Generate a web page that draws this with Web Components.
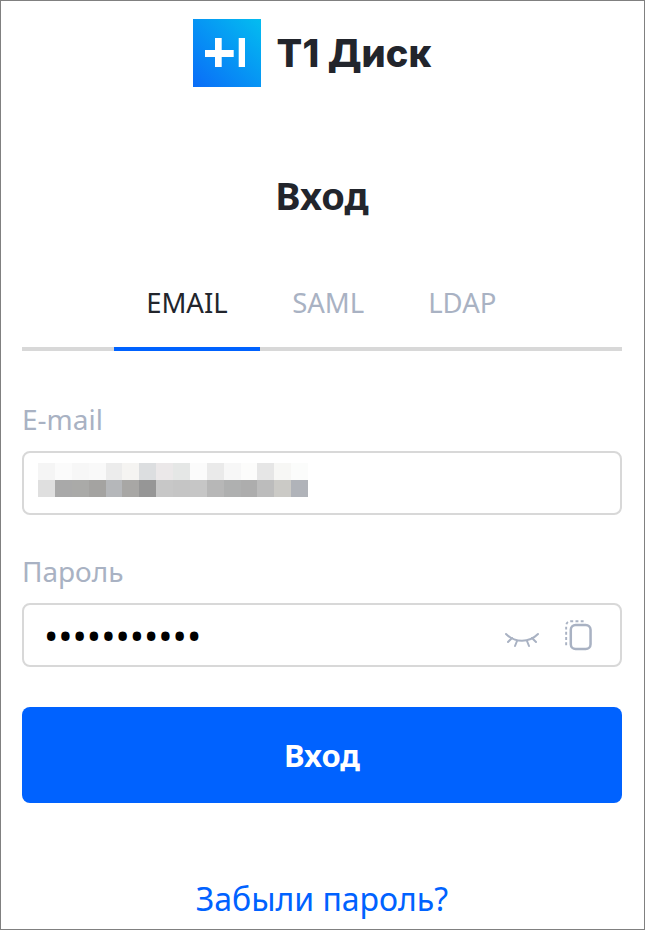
<!DOCTYPE html>
<html lang="ru">
<head>
<meta charset="utf-8">
<title>Вход</title>
<style>
  html, body { margin: 0; padding: 0; background: #fff; }
  body { font-family: "Noto Sans", "Open Sans", sans-serif; }
  .dots { display: block; margin-left: 6px; font-size: 38px; line-height: 38px; }
</style>
</head>
<body>
<login-page>
  <brand-logo></brand-logo>
  <h-title>Вход</h-title>
  <tab-bar>
    <tab-item active>EMAIL</tab-item>
    <tab-item>SAML</tab-item>
    <tab-item>LDAP</tab-item>
  </tab-bar>
  <form-field label="E-mail"><blurred-value></blurred-value></form-field>
  <form-field label="Пароль">
    <span class="dots">•••••••••••</span>
    <field-icons slot="end"></field-icons>
  </form-field>
  <login-button>Вход</login-button>
  <forgot-link>Забыли пароль?</forgot-link>
</login-page>
<script>
  // small helper so each class only has to give its markup
  class ShadowElement extends HTMLElement {
    constructor() {
      super();
      this.attachShadow({ mode: 'open' });
      this.shadowRoot.innerHTML = this.markup();
    }
    markup() { return '<slot></slot>'; }
  }

  customElements.define('login-page', class extends ShadowElement {
    markup() {
      return `<style>
        :host { display: flex; flex-direction: column; box-sizing: border-box; width: 645px; height: 930px;
          border: 1px solid #808080; padding: 18px 22px 0 21px; overflow: hidden; }
        ::slotted(*) { flex: none; }
      </style><slot></slot>`;
    }
  });

  customElements.define('brand-logo', class extends ShadowElement {
    markup() {
      return `<style>
        :host { display: flex; align-items: center; justify-content: center; gap: 16px; height: 68px; padding-right: 20px; }
        svg { display: block; }
        span { font: 800 38px/68px Inter, sans-serif; color: #22252c; letter-spacing: 0.1px; }
      </style>
      <svg width="68" height="68" viewBox="0 0 68 68">
        <defs><linearGradient id="g" x1="0" y1="1" x2="1" y2="0">
          <stop offset="0" stop-color="#0a6cf8"/><stop offset="1" stop-color="#03bdf0"/>
        </linearGradient></defs>
        <rect width="68" height="68" fill="url(#g)"/>
        <path d="M12 31h28.7v7H12zM22 19h6.7v29H22zM45.7 19H52v29h-6.3z" fill="#fff"/>
      </svg>
      <span>T1 Диск</span>`;
    }
  });

  customElements.define('h-title', class extends ShadowElement {
    markup() {
      return `<style>
        :host { display: block; margin-top: 84px; text-align: center; font-size: 38px; line-height: 48px;
          font-weight: 700; color: #22252c; }
      </style><slot></slot>`;
    }
  });

  customElements.define('tab-bar', class extends ShadowElement {
    markup() {
      return `<style>
        :host { display: flex; justify-content: center; margin-top: 51px; margin-bottom: 12px; padding-right: 2px;
          border-bottom: 4px solid #d8d8d8; height: 77px; }
      </style><slot></slot>`;
    }
  });

  customElements.define('tab-item', class extends ShadowElement {
    markup() {
      return `<style>
        :host { display: block; padding: 15px 32px 0; margin-bottom: -4px; height: 62px; border-bottom: 4px solid transparent;
          font-size: 27.5px; line-height: 36px; color: #a9b2c3; }
        :host([active]) { padding: 15px 32.5px 0; color: #22252c; border-bottom-color: #0062ff; }
      </style><slot></slot>`;
    }
  });

  customElements.define('form-field', class extends ShadowElement {
    markup() {
      return `<style>
        :host { display: block; margin-top: 39px; }
        label { display: block; font-size: 28px; line-height: 34px; color: #a9b2c3; margin-bottom: 15px; }
        .box { display: flex; align-items: center; box-sizing: border-box; height: 64px; border: 2px solid #d8d8d8;
          border-radius: 8px; padding: 0 28px 0 14px; color: #000; }
        .main { flex: 1; }
      </style>
      <label>${this.getAttribute('label')}</label>
      <div class="box"><div class="main"><slot></slot></div><slot name="end"></slot></div>`;
    }
  });

  // the e-mail value is pixelated in the reference, 16 cells in 2 rows
  const blurTop = ['#f5f5f5','#fbfbfb','#f7f7f7','#f9f9f9','#ececec','#f5f4f2','#dcdee0','#ebe8e9','#e5e7e6','#fbfbfb','#eaeaea','#f7f7f7','#fcfcfb','#e6e6e6','#f7f7f5','#fbfcfb'];
  const blurBottom = ['#dfdfdf','#a9a9a9','#aaaaa8','#a4a3a1','#b5b7ba','#a8a7a5','#969696','#c7c7c7','#c5c5c5','#c6c6c6','#b7b7b7','#afb0b0','#adadad','#bcbcbc','#cbcac6','#b0b3b9'];

  customElements.define('blurred-value', class extends ShadowElement {
    markup() {
      const cells = blurTop.concat(blurBottom).map(c => `<i style="background:${c}"></i>`).join('');
      return `<style>
        :host { display: block; width: 270px; margin-top: -6px; }
        div { display: grid; grid-template-columns: repeat(16, 1fr); grid-auto-rows: 17px; }
      </style><div>${cells}</div>`;
    }
  });

  customElements.define('field-icons', class extends ShadowElement {
    markup() {
      return `<style>
        :host { display: flex; align-items: center; gap: 26px; }
        svg { display: block; fill: none; stroke: #a9b2c3; stroke-linecap: round; }
        .eye { margin-top: 11px; }
      </style>
      <svg class="eye" width="34" height="17" viewBox="0 0 34 17" stroke-width="2">
        <path d="M1 2c9 9 23 9 32 0"/>
        <path d="M7 6 3 10M12 9l-2 5M22 9l2 5M27 6l4 4"/>
      </svg>
      <svg width="27" height="31" viewBox="0 0 28 32" stroke-width="2.6">
        <rect x="6" y="5" width="20.5" height="25" rx="5"/>
        <path d="M1.2 26V6C1.2 3 3 1.2 6 1.2h15" stroke-dasharray="3 2.4" stroke-linecap="butt" stroke-width="2"/>
      </svg>`;
    }
  });

  customElements.define('login-button', class extends ShadowElement {
    markup() {
      return `<style>
        :host { display: flex; align-items: center; justify-content: center; height: 96px; margin-top: 40px;
          background: #0062ff; border-radius: 8px; color: #fff; font-size: 31px; font-weight: 700; }
      </style><slot></slot>`;
    }
  });

  customElements.define('forgot-link', class extends ShadowElement {
    markup() {
      return `<style>
        :host { display: block; margin-top: 76px; text-align: center; font-size: 32px; line-height: 40px; color: #0062ff; }
      </style><slot></slot>`;
    }
  });
</script>
</body>
</html>
